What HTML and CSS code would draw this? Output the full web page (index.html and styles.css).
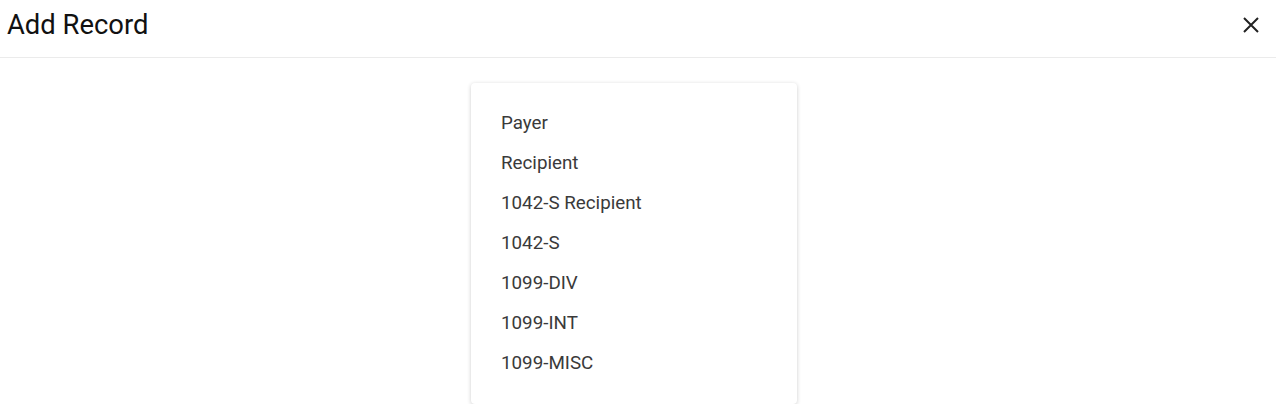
FILE: index.html
```html
<!DOCTYPE html>
<html>
<head>
<meta charset="utf-8">
<link rel="stylesheet" href="styles.css">
</head>
<body>
<div class="header">
  <h1 class="title">Add Record</h1>
  <button class="close" aria-label="Close">
    <svg width="18" height="18" viewBox="0 0 18 18"><path d="M2 2 L16 16 M16 2 L2 16" stroke="#222" stroke-width="2" fill="none"/></svg>
  </button>
</div>
<div class="content">
  <ul class="menu">
    <li>Payer</li>
    <li>Recipient</li>
    <li>1042-S Recipient</li>
    <li>1042-S</li>
    <li>1099-DIV</li>
    <li>1099-INT</li>
    <li>1099-MISC</li>
  </ul>
</div>
</body>
</html>
```
FILE: styles.css
```css
html, body { margin: 0; padding: 0; background: #fff; }
body { font-family: Roboto, "Noto Sans", sans-serif; color: #000; }
.header {
  height: 57px;
  border-bottom: 1px solid #ebebeb;
  display: flex;
  align-items: center;
  justify-content: space-between;
  padding: 0 16px 0 7px;
}
.title { margin: 0; font-size: 27.4px; font-weight: 400; color: #111; line-height: 1; margin-top: -6px; }
.close { border: 0; background: none; padding: 0; width: 18px; height: 18px; display: flex; margin-top: -7px; }
.content { display: flex; justify-content: center; padding-top: 25px; padding-right: 8px; }
.menu {
  list-style: none;
  margin: 0;
  width: 266px;
  padding: 20px 30px 21px;
  border-radius: 4px;
  box-shadow: 0 1px 4px rgba(0,0,0,0.2);
  background: #fff;
}
.menu li { height: 40px; line-height: 40px; font-size: 18.8px; color: #3a3a3a; }
```
